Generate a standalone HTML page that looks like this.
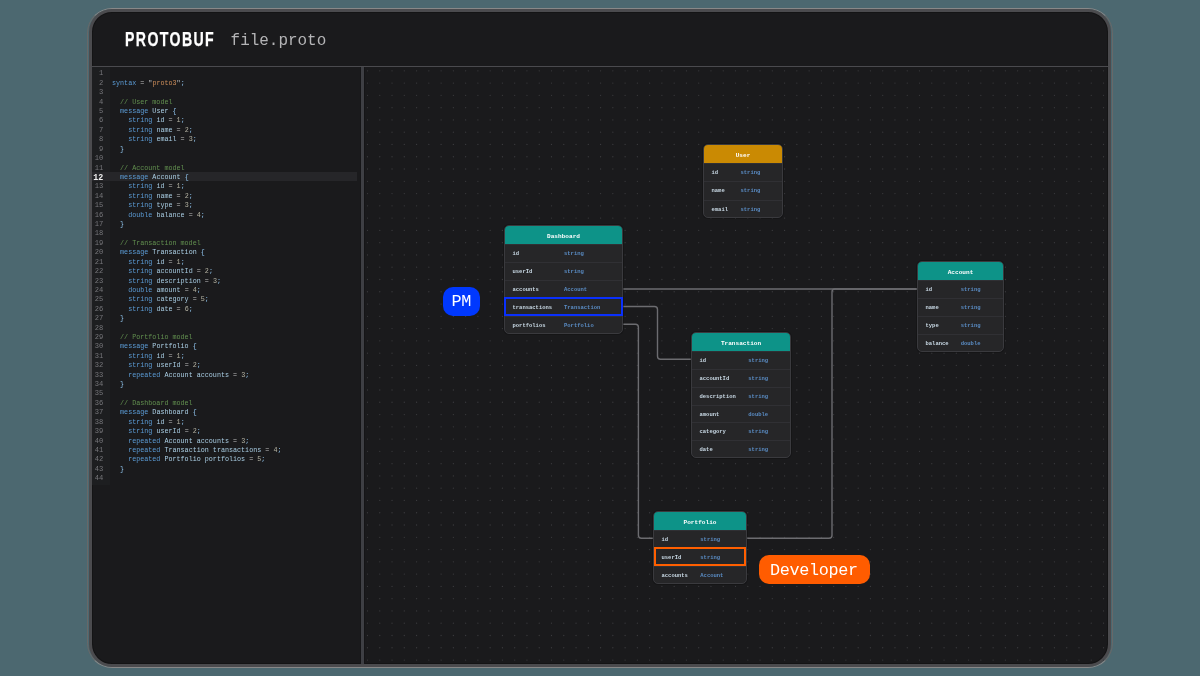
<!DOCTYPE html>
<html><head><meta charset="utf-8">
<style>
*{margin:0;padding:0;box-sizing:border-box}
html,body{width:1200px;height:676px;overflow:hidden;background:#4c6870}
body{position:relative;font-family:"Liberation Mono",monospace}
.abs{position:absolute}
#outline{position:absolute;left:87px;top:8px;width:1026px;height:660px;border:1px solid #888;border-left-color:#686868;border-right-color:#686868;border-radius:25px}
#win{position:absolute;left:89px;top:9px;width:1022px;height:658px;border:3px solid #4b4b4e;border-radius:23px;background:#1a1a1c;box-shadow:inset 0 0 0 1px #141415;overflow:hidden}
#hline{position:absolute;left:92px;top:66px;width:1016px;height:1px;background:#4a4a4e}
#vline{position:absolute;left:361px;top:67px;width:2.6px;height:597px;background:#3e3f44;box-shadow:-1px 0 0 #151517,1px 0 0 #151517}
#brand{position:absolute;left:124.6px;top:26.5px;font-family:"Liberation Sans",sans-serif;font-weight:bold;font-size:19.9px;letter-spacing:1.95px;line-height:24px;color:#fff;-webkit-text-stroke:0.25px #fff;transform-origin:0 0;transform:scaleX(0.71);white-space:nowrap}
#fname{position:absolute;left:230.6px;top:29.7px;font-size:15.95px;line-height:22px;color:#b4b4b6;white-space:nowrap}
#gutter{position:absolute;left:92px;top:67px;width:18px;height:418px;background:#1d1e20}
.cur-row{position:absolute;left:92px;top:171.8px;width:265.2px;height:9.2px;background:#262629}
.ln{position:absolute;left:90px;width:13.2px;text-align:right;font-size:7.1px;line-height:9.445px;color:#76767a;white-space:pre}
.ln.cur{color:#f0f0f0;font-weight:bold;font-size:8.3px}
.cl{position:absolute;left:112px;font-size:6.73px;line-height:9.445px;white-space:pre;color:#c8d0d8}
.kw{color:#5b9bd5} .ty{color:#acd0e6} .id{color:#a8cce2} .nu{color:#b4b2a2} .br{color:#8fc3ec} .pu{color:#c0c0c0} .st{color:#ce8e5a} .cm{color:#62904f}
#canvas{position:absolute;left:0;top:0}
.tb{position:absolute;background:#262628;border:1px solid #3a3a3e;border-radius:5px;overflow:hidden;box-shadow:0 0 0 1px rgba(0,0,0,0.18)}
.th{position:absolute;left:0;top:0;right:0;height:18.2px;text-align:center;color:#fff;font-weight:bold;font-size:6.1px;line-height:21.6px}
.tr{position:absolute;left:0;right:0;border-top:1px solid #303034}
.fn{position:absolute;left:7.5px;top:0;font-size:5.5px;color:#c8d8e4;font-weight:bold}
.ft{position:absolute;top:0;font-size:5.5px;color:#5a8cc4;font-weight:bold}
.hl{position:absolute;border:2px solid}
.badge{position:absolute;color:#fff;text-align:center;white-space:nowrap}
</style></head><body><div id="root" style="position:absolute;left:0;top:0;width:1200px;height:676px;will-change:transform">
<div id="outline"></div>
<div id="win"></div>
<div id="hline"></div>
<div id="vline"></div>
<div id="brand">PROTOBUF</div>
<div id="fname">file.proto</div>
<div id="gutter"></div><div class="cur-row"></div>
<div class="ln" style="top:69.40px">1</div><div class="cl" style="top:69.40px"></div><div class="ln" style="top:78.81px">2</div><div class="cl" style="top:78.81px"><span class="kw">syntax</span> <span class="pu">=</span> <span class="pu">"</span><span class="st">proto3</span><span class="pu">"</span><span class="br">;</span></div><div class="ln" style="top:88.23px">3</div><div class="cl" style="top:88.23px"></div><div class="ln" style="top:97.64px">4</div><div class="cl" style="top:97.64px">  <span class="cm">// User model</span></div><div class="ln" style="top:107.06px">5</div><div class="cl" style="top:107.06px">  <span class="kw">message</span> <span class="ty">User</span> <span class="br">{</span></div><div class="ln" style="top:116.47px">6</div><div class="cl" style="top:116.47px">    <span class="kw">string</span> <span class="id">id</span> <span class="pu">=</span> <span class="nu">1</span><span class="br">;</span></div><div class="ln" style="top:125.88px">7</div><div class="cl" style="top:125.88px">    <span class="kw">string</span> <span class="id">name</span> <span class="pu">=</span> <span class="nu">2</span><span class="br">;</span></div><div class="ln" style="top:135.30px">8</div><div class="cl" style="top:135.30px">    <span class="kw">string</span> <span class="id">email</span> <span class="pu">=</span> <span class="nu">3</span><span class="br">;</span></div><div class="ln" style="top:144.71px">9</div><div class="cl" style="top:144.71px">  <span class="br">}</span></div><div class="ln" style="top:154.13px">10</div><div class="cl" style="top:154.13px"></div><div class="ln" style="top:163.54px">11</div><div class="cl" style="top:163.54px">  <span class="cm">// Account model</span></div><div class="ln cur" style="top:172.95px">12</div><div class="cl" style="top:172.95px">  <span class="kw">message</span> <span class="ty">Account</span> <span class="br">{</span></div><div class="ln" style="top:182.37px">13</div><div class="cl" style="top:182.37px">    <span class="kw">string</span> <span class="id">id</span> <span class="pu">=</span> <span class="nu">1</span><span class="br">;</span></div><div class="ln" style="top:191.78px">14</div><div class="cl" style="top:191.78px">    <span class="kw">string</span> <span class="id">name</span> <span class="pu">=</span> <span class="nu">2</span><span class="br">;</span></div><div class="ln" style="top:201.20px">15</div><div class="cl" style="top:201.20px">    <span class="kw">string</span> <span class="id">type</span> <span class="pu">=</span> <span class="nu">3</span><span class="br">;</span></div><div class="ln" style="top:210.61px">16</div><div class="cl" style="top:210.61px">    <span class="kw">double</span> <span class="id">balance</span> <span class="pu">=</span> <span class="nu">4</span><span class="br">;</span></div><div class="ln" style="top:220.02px">17</div><div class="cl" style="top:220.02px">  <span class="br">}</span></div><div class="ln" style="top:229.44px">18</div><div class="cl" style="top:229.44px"></div><div class="ln" style="top:238.85px">19</div><div class="cl" style="top:238.85px">  <span class="cm">// Transaction model</span></div><div class="ln" style="top:248.27px">20</div><div class="cl" style="top:248.27px">  <span class="kw">message</span> <span class="ty">Transaction</span> <span class="br">{</span></div><div class="ln" style="top:257.68px">21</div><div class="cl" style="top:257.68px">    <span class="kw">string</span> <span class="id">id</span> <span class="pu">=</span> <span class="nu">1</span><span class="br">;</span></div><div class="ln" style="top:267.09px">22</div><div class="cl" style="top:267.09px">    <span class="kw">string</span> <span class="id">accountId</span> <span class="pu">=</span> <span class="nu">2</span><span class="br">;</span></div><div class="ln" style="top:276.51px">23</div><div class="cl" style="top:276.51px">    <span class="kw">string</span> <span class="id">description</span> <span class="pu">=</span> <span class="nu">3</span><span class="br">;</span></div><div class="ln" style="top:285.92px">24</div><div class="cl" style="top:285.92px">    <span class="kw">double</span> <span class="id">amount</span> <span class="pu">=</span> <span class="nu">4</span><span class="br">;</span></div><div class="ln" style="top:295.34px">25</div><div class="cl" style="top:295.34px">    <span class="kw">string</span> <span class="id">category</span> <span class="pu">=</span> <span class="nu">5</span><span class="br">;</span></div><div class="ln" style="top:304.75px">26</div><div class="cl" style="top:304.75px">    <span class="kw">string</span> <span class="id">date</span> <span class="pu">=</span> <span class="nu">6</span><span class="br">;</span></div><div class="ln" style="top:314.16px">27</div><div class="cl" style="top:314.16px">  <span class="br">}</span></div><div class="ln" style="top:323.58px">28</div><div class="cl" style="top:323.58px"></div><div class="ln" style="top:332.99px">29</div><div class="cl" style="top:332.99px">  <span class="cm">// Portfolio model</span></div><div class="ln" style="top:342.41px">30</div><div class="cl" style="top:342.41px">  <span class="kw">message</span> <span class="ty">Portfolio</span> <span class="br">{</span></div><div class="ln" style="top:351.82px">31</div><div class="cl" style="top:351.82px">    <span class="kw">string</span> <span class="id">id</span> <span class="pu">=</span> <span class="nu">1</span><span class="br">;</span></div><div class="ln" style="top:361.23px">32</div><div class="cl" style="top:361.23px">    <span class="kw">string</span> <span class="id">userId</span> <span class="pu">=</span> <span class="nu">2</span><span class="br">;</span></div><div class="ln" style="top:370.65px">33</div><div class="cl" style="top:370.65px">    <span class="kw">repeated</span> <span class="ty">Account</span> <span class="id">accounts</span> <span class="pu">=</span> <span class="nu">3</span><span class="br">;</span></div><div class="ln" style="top:380.06px">34</div><div class="cl" style="top:380.06px">  <span class="br">}</span></div><div class="ln" style="top:389.48px">35</div><div class="cl" style="top:389.48px"></div><div class="ln" style="top:398.89px">36</div><div class="cl" style="top:398.89px">  <span class="cm">// Dashboard model</span></div><div class="ln" style="top:408.30px">37</div><div class="cl" style="top:408.30px">  <span class="kw">message</span> <span class="ty">Dashboard</span> <span class="br">{</span></div><div class="ln" style="top:417.72px">38</div><div class="cl" style="top:417.72px">    <span class="kw">string</span> <span class="id">id</span> <span class="pu">=</span> <span class="nu">1</span><span class="br">;</span></div><div class="ln" style="top:427.13px">39</div><div class="cl" style="top:427.13px">    <span class="kw">string</span> <span class="id">userId</span> <span class="pu">=</span> <span class="nu">2</span><span class="br">;</span></div><div class="ln" style="top:436.55px">40</div><div class="cl" style="top:436.55px">    <span class="kw">repeated</span> <span class="ty">Account</span> <span class="id">accounts</span> <span class="pu">=</span> <span class="nu">3</span><span class="br">;</span></div><div class="ln" style="top:445.96px">41</div><div class="cl" style="top:445.96px">    <span class="kw">repeated</span> <span class="ty">Transaction</span> <span class="id">transactions</span> <span class="pu">=</span> <span class="nu">4</span><span class="br">;</span></div><div class="ln" style="top:455.37px">42</div><div class="cl" style="top:455.37px">    <span class="kw">repeated</span> <span class="ty">Portfolio</span> <span class="id">portfolios</span> <span class="pu">=</span> <span class="nu">5</span><span class="br">;</span></div><div class="ln" style="top:464.79px">43</div><div class="cl" style="top:464.79px">  <span class="br">}</span></div><div class="ln" style="top:474.20px">44</div><div class="cl" style="top:474.20px"></div>
<svg id="canvas" width="1200" height="676" viewBox="0 0 1200 676">
<defs><clipPath id="cp"><rect x="364" y="67" width="744" height="597"/></clipPath></defs>
<path clip-path="url(#cp)" d="M367.50 70.80h0M379.77 70.80h0M392.03 70.80h0M404.30 70.80h0M416.57 70.80h0M428.83 70.80h0M441.10 70.80h0M453.37 70.80h0M465.64 70.80h0M477.90 70.80h0M490.17 70.80h0M502.44 70.80h0M514.70 70.80h0M526.97 70.80h0M539.24 70.80h0M551.50 70.80h0M563.77 70.80h0M576.04 70.80h0M588.31 70.80h0M600.57 70.80h0M612.84 70.80h0M625.11 70.80h0M637.37 70.80h0M649.64 70.80h0M661.91 70.80h0M674.17 70.80h0M686.44 70.80h0M698.71 70.80h0M710.98 70.80h0M723.24 70.80h0M735.51 70.80h0M747.78 70.80h0M760.04 70.80h0M772.31 70.80h0M784.58 70.80h0M796.85 70.80h0M809.11 70.80h0M821.38 70.80h0M833.65 70.80h0M845.91 70.80h0M858.18 70.80h0M870.45 70.80h0M882.71 70.80h0M894.98 70.80h0M907.25 70.80h0M919.51 70.80h0M931.78 70.80h0M944.05 70.80h0M956.32 70.80h0M968.58 70.80h0M980.85 70.80h0M993.12 70.80h0M1005.38 70.80h0M1017.65 70.80h0M1029.92 70.80h0M1042.18 70.80h0M1054.45 70.80h0M1066.72 70.80h0M1078.99 70.80h0M1091.25 70.80h0M1103.52 70.80h0M367.50 83.08h0M379.77 83.08h0M392.03 83.08h0M404.30 83.08h0M416.57 83.08h0M428.83 83.08h0M441.10 83.08h0M453.37 83.08h0M465.64 83.08h0M477.90 83.08h0M490.17 83.08h0M502.44 83.08h0M514.70 83.08h0M526.97 83.08h0M539.24 83.08h0M551.50 83.08h0M563.77 83.08h0M576.04 83.08h0M588.31 83.08h0M600.57 83.08h0M612.84 83.08h0M625.11 83.08h0M637.37 83.08h0M649.64 83.08h0M661.91 83.08h0M674.17 83.08h0M686.44 83.08h0M698.71 83.08h0M710.98 83.08h0M723.24 83.08h0M735.51 83.08h0M747.78 83.08h0M760.04 83.08h0M772.31 83.08h0M784.58 83.08h0M796.85 83.08h0M809.11 83.08h0M821.38 83.08h0M833.65 83.08h0M845.91 83.08h0M858.18 83.08h0M870.45 83.08h0M882.71 83.08h0M894.98 83.08h0M907.25 83.08h0M919.51 83.08h0M931.78 83.08h0M944.05 83.08h0M956.32 83.08h0M968.58 83.08h0M980.85 83.08h0M993.12 83.08h0M1005.38 83.08h0M1017.65 83.08h0M1029.92 83.08h0M1042.18 83.08h0M1054.45 83.08h0M1066.72 83.08h0M1078.99 83.08h0M1091.25 83.08h0M1103.52 83.08h0M367.50 95.35h0M379.77 95.35h0M392.03 95.35h0M404.30 95.35h0M416.57 95.35h0M428.83 95.35h0M441.10 95.35h0M453.37 95.35h0M465.64 95.35h0M477.90 95.35h0M490.17 95.35h0M502.44 95.35h0M514.70 95.35h0M526.97 95.35h0M539.24 95.35h0M551.50 95.35h0M563.77 95.35h0M576.04 95.35h0M588.31 95.35h0M600.57 95.35h0M612.84 95.35h0M625.11 95.35h0M637.37 95.35h0M649.64 95.35h0M661.91 95.35h0M674.17 95.35h0M686.44 95.35h0M698.71 95.35h0M710.98 95.35h0M723.24 95.35h0M735.51 95.35h0M747.78 95.35h0M760.04 95.35h0M772.31 95.35h0M784.58 95.35h0M796.85 95.35h0M809.11 95.35h0M821.38 95.35h0M833.65 95.35h0M845.91 95.35h0M858.18 95.35h0M870.45 95.35h0M882.71 95.35h0M894.98 95.35h0M907.25 95.35h0M919.51 95.35h0M931.78 95.35h0M944.05 95.35h0M956.32 95.35h0M968.58 95.35h0M980.85 95.35h0M993.12 95.35h0M1005.38 95.35h0M1017.65 95.35h0M1029.92 95.35h0M1042.18 95.35h0M1054.45 95.35h0M1066.72 95.35h0M1078.99 95.35h0M1091.25 95.35h0M1103.52 95.35h0M367.50 107.63h0M379.77 107.63h0M392.03 107.63h0M404.30 107.63h0M416.57 107.63h0M428.83 107.63h0M441.10 107.63h0M453.37 107.63h0M465.64 107.63h0M477.90 107.63h0M490.17 107.63h0M502.44 107.63h0M514.70 107.63h0M526.97 107.63h0M539.24 107.63h0M551.50 107.63h0M563.77 107.63h0M576.04 107.63h0M588.31 107.63h0M600.57 107.63h0M612.84 107.63h0M625.11 107.63h0M637.37 107.63h0M649.64 107.63h0M661.91 107.63h0M674.17 107.63h0M686.44 107.63h0M698.71 107.63h0M710.98 107.63h0M723.24 107.63h0M735.51 107.63h0M747.78 107.63h0M760.04 107.63h0M772.31 107.63h0M784.58 107.63h0M796.85 107.63h0M809.11 107.63h0M821.38 107.63h0M833.65 107.63h0M845.91 107.63h0M858.18 107.63h0M870.45 107.63h0M882.71 107.63h0M894.98 107.63h0M907.25 107.63h0M919.51 107.63h0M931.78 107.63h0M944.05 107.63h0M956.32 107.63h0M968.58 107.63h0M980.85 107.63h0M993.12 107.63h0M1005.38 107.63h0M1017.65 107.63h0M1029.92 107.63h0M1042.18 107.63h0M1054.45 107.63h0M1066.72 107.63h0M1078.99 107.63h0M1091.25 107.63h0M1103.52 107.63h0M367.50 119.90h0M379.77 119.90h0M392.03 119.90h0M404.30 119.90h0M416.57 119.90h0M428.83 119.90h0M441.10 119.90h0M453.37 119.90h0M465.64 119.90h0M477.90 119.90h0M490.17 119.90h0M502.44 119.90h0M514.70 119.90h0M526.97 119.90h0M539.24 119.90h0M551.50 119.90h0M563.77 119.90h0M576.04 119.90h0M588.31 119.90h0M600.57 119.90h0M612.84 119.90h0M625.11 119.90h0M637.37 119.90h0M649.64 119.90h0M661.91 119.90h0M674.17 119.90h0M686.44 119.90h0M698.71 119.90h0M710.98 119.90h0M723.24 119.90h0M735.51 119.90h0M747.78 119.90h0M760.04 119.90h0M772.31 119.90h0M784.58 119.90h0M796.85 119.90h0M809.11 119.90h0M821.38 119.90h0M833.65 119.90h0M845.91 119.90h0M858.18 119.90h0M870.45 119.90h0M882.71 119.90h0M894.98 119.90h0M907.25 119.90h0M919.51 119.90h0M931.78 119.90h0M944.05 119.90h0M956.32 119.90h0M968.58 119.90h0M980.85 119.90h0M993.12 119.90h0M1005.38 119.90h0M1017.65 119.90h0M1029.92 119.90h0M1042.18 119.90h0M1054.45 119.90h0M1066.72 119.90h0M1078.99 119.90h0M1091.25 119.90h0M1103.52 119.90h0M367.50 132.18h0M379.77 132.18h0M392.03 132.18h0M404.30 132.18h0M416.57 132.18h0M428.83 132.18h0M441.10 132.18h0M453.37 132.18h0M465.64 132.18h0M477.90 132.18h0M490.17 132.18h0M502.44 132.18h0M514.70 132.18h0M526.97 132.18h0M539.24 132.18h0M551.50 132.18h0M563.77 132.18h0M576.04 132.18h0M588.31 132.18h0M600.57 132.18h0M612.84 132.18h0M625.11 132.18h0M637.37 132.18h0M649.64 132.18h0M661.91 132.18h0M674.17 132.18h0M686.44 132.18h0M698.71 132.18h0M710.98 132.18h0M723.24 132.18h0M735.51 132.18h0M747.78 132.18h0M760.04 132.18h0M772.31 132.18h0M784.58 132.18h0M796.85 132.18h0M809.11 132.18h0M821.38 132.18h0M833.65 132.18h0M845.91 132.18h0M858.18 132.18h0M870.45 132.18h0M882.71 132.18h0M894.98 132.18h0M907.25 132.18h0M919.51 132.18h0M931.78 132.18h0M944.05 132.18h0M956.32 132.18h0M968.58 132.18h0M980.85 132.18h0M993.12 132.18h0M1005.38 132.18h0M1017.65 132.18h0M1029.92 132.18h0M1042.18 132.18h0M1054.45 132.18h0M1066.72 132.18h0M1078.99 132.18h0M1091.25 132.18h0M1103.52 132.18h0M367.50 144.46h0M379.77 144.46h0M392.03 144.46h0M404.30 144.46h0M416.57 144.46h0M428.83 144.46h0M441.10 144.46h0M453.37 144.46h0M465.64 144.46h0M477.90 144.46h0M490.17 144.46h0M502.44 144.46h0M514.70 144.46h0M526.97 144.46h0M539.24 144.46h0M551.50 144.46h0M563.77 144.46h0M576.04 144.46h0M588.31 144.46h0M600.57 144.46h0M612.84 144.46h0M625.11 144.46h0M637.37 144.46h0M649.64 144.46h0M661.91 144.46h0M674.17 144.46h0M686.44 144.46h0M698.71 144.46h0M710.98 144.46h0M723.24 144.46h0M735.51 144.46h0M747.78 144.46h0M760.04 144.46h0M772.31 144.46h0M784.58 144.46h0M796.85 144.46h0M809.11 144.46h0M821.38 144.46h0M833.65 144.46h0M845.91 144.46h0M858.18 144.46h0M870.45 144.46h0M882.71 144.46h0M894.98 144.46h0M907.25 144.46h0M919.51 144.46h0M931.78 144.46h0M944.05 144.46h0M956.32 144.46h0M968.58 144.46h0M980.85 144.46h0M993.12 144.46h0M1005.38 144.46h0M1017.65 144.46h0M1029.92 144.46h0M1042.18 144.46h0M1054.45 144.46h0M1066.72 144.46h0M1078.99 144.46h0M1091.25 144.46h0M1103.52 144.46h0M367.50 156.73h0M379.77 156.73h0M392.03 156.73h0M404.30 156.73h0M416.57 156.73h0M428.83 156.73h0M441.10 156.73h0M453.37 156.73h0M465.64 156.73h0M477.90 156.73h0M490.17 156.73h0M502.44 156.73h0M514.70 156.73h0M526.97 156.73h0M539.24 156.73h0M551.50 156.73h0M563.77 156.73h0M576.04 156.73h0M588.31 156.73h0M600.57 156.73h0M612.84 156.73h0M625.11 156.73h0M637.37 156.73h0M649.64 156.73h0M661.91 156.73h0M674.17 156.73h0M686.44 156.73h0M698.71 156.73h0M710.98 156.73h0M723.24 156.73h0M735.51 156.73h0M747.78 156.73h0M760.04 156.73h0M772.31 156.73h0M784.58 156.73h0M796.85 156.73h0M809.11 156.73h0M821.38 156.73h0M833.65 156.73h0M845.91 156.73h0M858.18 156.73h0M870.45 156.73h0M882.71 156.73h0M894.98 156.73h0M907.25 156.73h0M919.51 156.73h0M931.78 156.73h0M944.05 156.73h0M956.32 156.73h0M968.58 156.73h0M980.85 156.73h0M993.12 156.73h0M1005.38 156.73h0M1017.65 156.73h0M1029.92 156.73h0M1042.18 156.73h0M1054.45 156.73h0M1066.72 156.73h0M1078.99 156.73h0M1091.25 156.73h0M1103.52 156.73h0M367.50 169.01h0M379.77 169.01h0M392.03 169.01h0M404.30 169.01h0M416.57 169.01h0M428.83 169.01h0M441.10 169.01h0M453.37 169.01h0M465.64 169.01h0M477.90 169.01h0M490.17 169.01h0M502.44 169.01h0M514.70 169.01h0M526.97 169.01h0M539.24 169.01h0M551.50 169.01h0M563.77 169.01h0M576.04 169.01h0M588.31 169.01h0M600.57 169.01h0M612.84 169.01h0M625.11 169.01h0M637.37 169.01h0M649.64 169.01h0M661.91 169.01h0M674.17 169.01h0M686.44 169.01h0M698.71 169.01h0M710.98 169.01h0M723.24 169.01h0M735.51 169.01h0M747.78 169.01h0M760.04 169.01h0M772.31 169.01h0M784.58 169.01h0M796.85 169.01h0M809.11 169.01h0M821.38 169.01h0M833.65 169.01h0M845.91 169.01h0M858.18 169.01h0M870.45 169.01h0M882.71 169.01h0M894.98 169.01h0M907.25 169.01h0M919.51 169.01h0M931.78 169.01h0M944.05 169.01h0M956.32 169.01h0M968.58 169.01h0M980.85 169.01h0M993.12 169.01h0M1005.38 169.01h0M1017.65 169.01h0M1029.92 169.01h0M1042.18 169.01h0M1054.45 169.01h0M1066.72 169.01h0M1078.99 169.01h0M1091.25 169.01h0M1103.52 169.01h0M367.50 181.28h0M379.77 181.28h0M392.03 181.28h0M404.30 181.28h0M416.57 181.28h0M428.83 181.28h0M441.10 181.28h0M453.37 181.28h0M465.64 181.28h0M477.90 181.28h0M490.17 181.28h0M502.44 181.28h0M514.70 181.28h0M526.97 181.28h0M539.24 181.28h0M551.50 181.28h0M563.77 181.28h0M576.04 181.28h0M588.31 181.28h0M600.57 181.28h0M612.84 181.28h0M625.11 181.28h0M637.37 181.28h0M649.64 181.28h0M661.91 181.28h0M674.17 181.28h0M686.44 181.28h0M698.71 181.28h0M710.98 181.28h0M723.24 181.28h0M735.51 181.28h0M747.78 181.28h0M760.04 181.28h0M772.31 181.28h0M784.58 181.28h0M796.85 181.28h0M809.11 181.28h0M821.38 181.28h0M833.65 181.28h0M845.91 181.28h0M858.18 181.28h0M870.45 181.28h0M882.71 181.28h0M894.98 181.28h0M907.25 181.28h0M919.51 181.28h0M931.78 181.28h0M944.05 181.28h0M956.32 181.28h0M968.58 181.28h0M980.85 181.28h0M993.12 181.28h0M1005.38 181.28h0M1017.65 181.28h0M1029.92 181.28h0M1042.18 181.28h0M1054.45 181.28h0M1066.72 181.28h0M1078.99 181.28h0M1091.25 181.28h0M1103.52 181.28h0M367.50 193.56h0M379.77 193.56h0M392.03 193.56h0M404.30 193.56h0M416.57 193.56h0M428.83 193.56h0M441.10 193.56h0M453.37 193.56h0M465.64 193.56h0M477.90 193.56h0M490.17 193.56h0M502.44 193.56h0M514.70 193.56h0M526.97 193.56h0M539.24 193.56h0M551.50 193.56h0M563.77 193.56h0M576.04 193.56h0M588.31 193.56h0M600.57 193.56h0M612.84 193.56h0M625.11 193.56h0M637.37 193.56h0M649.64 193.56h0M661.91 193.56h0M674.17 193.56h0M686.44 193.56h0M698.71 193.56h0M710.98 193.56h0M723.24 193.56h0M735.51 193.56h0M747.78 193.56h0M760.04 193.56h0M772.31 193.56h0M784.58 193.56h0M796.85 193.56h0M809.11 193.56h0M821.38 193.56h0M833.65 193.56h0M845.91 193.56h0M858.18 193.56h0M870.45 193.56h0M882.71 193.56h0M894.98 193.56h0M907.25 193.56h0M919.51 193.56h0M931.78 193.56h0M944.05 193.56h0M956.32 193.56h0M968.58 193.56h0M980.85 193.56h0M993.12 193.56h0M1005.38 193.56h0M1017.65 193.56h0M1029.92 193.56h0M1042.18 193.56h0M1054.45 193.56h0M1066.72 193.56h0M1078.99 193.56h0M1091.25 193.56h0M1103.52 193.56h0M367.50 205.84h0M379.77 205.84h0M392.03 205.84h0M404.30 205.84h0M416.57 205.84h0M428.83 205.84h0M441.10 205.84h0M453.37 205.84h0M465.64 205.84h0M477.90 205.84h0M490.17 205.84h0M502.44 205.84h0M514.70 205.84h0M526.97 205.84h0M539.24 205.84h0M551.50 205.84h0M563.77 205.84h0M576.04 205.84h0M588.31 205.84h0M600.57 205.84h0M612.84 205.84h0M625.11 205.84h0M637.37 205.84h0M649.64 205.84h0M661.91 205.84h0M674.17 205.84h0M686.44 205.84h0M698.71 205.84h0M710.98 205.84h0M723.24 205.84h0M735.51 205.84h0M747.78 205.84h0M760.04 205.84h0M772.31 205.84h0M784.58 205.84h0M796.85 205.84h0M809.11 205.84h0M821.38 205.84h0M833.65 205.84h0M845.91 205.84h0M858.18 205.84h0M870.45 205.84h0M882.71 205.84h0M894.98 205.84h0M907.25 205.84h0M919.51 205.84h0M931.78 205.84h0M944.05 205.84h0M956.32 205.84h0M968.58 205.84h0M980.85 205.84h0M993.12 205.84h0M1005.38 205.84h0M1017.65 205.84h0M1029.92 205.84h0M1042.18 205.84h0M1054.45 205.84h0M1066.72 205.84h0M1078.99 205.84h0M1091.25 205.84h0M1103.52 205.84h0M367.50 218.11h0M379.77 218.11h0M392.03 218.11h0M404.30 218.11h0M416.57 218.11h0M428.83 218.11h0M441.10 218.11h0M453.37 218.11h0M465.64 218.11h0M477.90 218.11h0M490.17 218.11h0M502.44 218.11h0M514.70 218.11h0M526.97 218.11h0M539.24 218.11h0M551.50 218.11h0M563.77 218.11h0M576.04 218.11h0M588.31 218.11h0M600.57 218.11h0M612.84 218.11h0M625.11 218.11h0M637.37 218.11h0M649.64 218.11h0M661.91 218.11h0M674.17 218.11h0M686.44 218.11h0M698.71 218.11h0M710.98 218.11h0M723.24 218.11h0M735.51 218.11h0M747.78 218.11h0M760.04 218.11h0M772.31 218.11h0M784.58 218.11h0M796.85 218.11h0M809.11 218.11h0M821.38 218.11h0M833.65 218.11h0M845.91 218.11h0M858.18 218.11h0M870.45 218.11h0M882.71 218.11h0M894.98 218.11h0M907.25 218.11h0M919.51 218.11h0M931.78 218.11h0M944.05 218.11h0M956.32 218.11h0M968.58 218.11h0M980.85 218.11h0M993.12 218.11h0M1005.38 218.11h0M1017.65 218.11h0M1029.92 218.11h0M1042.18 218.11h0M1054.45 218.11h0M1066.72 218.11h0M1078.99 218.11h0M1091.25 218.11h0M1103.52 218.11h0M367.50 230.39h0M379.77 230.39h0M392.03 230.39h0M404.30 230.39h0M416.57 230.39h0M428.83 230.39h0M441.10 230.39h0M453.37 230.39h0M465.64 230.39h0M477.90 230.39h0M490.17 230.39h0M502.44 230.39h0M514.70 230.39h0M526.97 230.39h0M539.24 230.39h0M551.50 230.39h0M563.77 230.39h0M576.04 230.39h0M588.31 230.39h0M600.57 230.39h0M612.84 230.39h0M625.11 230.39h0M637.37 230.39h0M649.64 230.39h0M661.91 230.39h0M674.17 230.39h0M686.44 230.39h0M698.71 230.39h0M710.98 230.39h0M723.24 230.39h0M735.51 230.39h0M747.78 230.39h0M760.04 230.39h0M772.31 230.39h0M784.58 230.39h0M796.85 230.39h0M809.11 230.39h0M821.38 230.39h0M833.65 230.39h0M845.91 230.39h0M858.18 230.39h0M870.45 230.39h0M882.71 230.39h0M894.98 230.39h0M907.25 230.39h0M919.51 230.39h0M931.78 230.39h0M944.05 230.39h0M956.32 230.39h0M968.58 230.39h0M980.85 230.39h0M993.12 230.39h0M1005.38 230.39h0M1017.65 230.39h0M1029.92 230.39h0M1042.18 230.39h0M1054.45 230.39h0M1066.72 230.39h0M1078.99 230.39h0M1091.25 230.39h0M1103.52 230.39h0M367.50 242.66h0M379.77 242.66h0M392.03 242.66h0M404.30 242.66h0M416.57 242.66h0M428.83 242.66h0M441.10 242.66h0M453.37 242.66h0M465.64 242.66h0M477.90 242.66h0M490.17 242.66h0M502.44 242.66h0M514.70 242.66h0M526.97 242.66h0M539.24 242.66h0M551.50 242.66h0M563.77 242.66h0M576.04 242.66h0M588.31 242.66h0M600.57 242.66h0M612.84 242.66h0M625.11 242.66h0M637.37 242.66h0M649.64 242.66h0M661.91 242.66h0M674.17 242.66h0M686.44 242.66h0M698.71 242.66h0M710.98 242.66h0M723.24 242.66h0M735.51 242.66h0M747.78 242.66h0M760.04 242.66h0M772.31 242.66h0M784.58 242.66h0M796.85 242.66h0M809.11 242.66h0M821.38 242.66h0M833.65 242.66h0M845.91 242.66h0M858.18 242.66h0M870.45 242.66h0M882.71 242.66h0M894.98 242.66h0M907.25 242.66h0M919.51 242.66h0M931.78 242.66h0M944.05 242.66h0M956.32 242.66h0M968.58 242.66h0M980.85 242.66h0M993.12 242.66h0M1005.38 242.66h0M1017.65 242.66h0M1029.92 242.66h0M1042.18 242.66h0M1054.45 242.66h0M1066.72 242.66h0M1078.99 242.66h0M1091.25 242.66h0M1103.52 242.66h0M367.50 254.94h0M379.77 254.94h0M392.03 254.94h0M404.30 254.94h0M416.57 254.94h0M428.83 254.94h0M441.10 254.94h0M453.37 254.94h0M465.64 254.94h0M477.90 254.94h0M490.17 254.94h0M502.44 254.94h0M514.70 254.94h0M526.97 254.94h0M539.24 254.94h0M551.50 254.94h0M563.77 254.94h0M576.04 254.94h0M588.31 254.94h0M600.57 254.94h0M612.84 254.94h0M625.11 254.94h0M637.37 254.94h0M649.64 254.94h0M661.91 254.94h0M674.17 254.94h0M686.44 254.94h0M698.71 254.94h0M710.98 254.94h0M723.24 254.94h0M735.51 254.94h0M747.78 254.94h0M760.04 254.94h0M772.31 254.94h0M784.58 254.94h0M796.85 254.94h0M809.11 254.94h0M821.38 254.94h0M833.65 254.94h0M845.91 254.94h0M858.18 254.94h0M870.45 254.94h0M882.71 254.94h0M894.98 254.94h0M907.25 254.94h0M919.51 254.94h0M931.78 254.94h0M944.05 254.94h0M956.32 254.94h0M968.58 254.94h0M980.85 254.94h0M993.12 254.94h0M1005.38 254.94h0M1017.65 254.94h0M1029.92 254.94h0M1042.18 254.94h0M1054.45 254.94h0M1066.72 254.94h0M1078.99 254.94h0M1091.25 254.94h0M1103.52 254.94h0M367.50 267.22h0M379.77 267.22h0M392.03 267.22h0M404.30 267.22h0M416.57 267.22h0M428.83 267.22h0M441.10 267.22h0M453.37 267.22h0M465.64 267.22h0M477.90 267.22h0M490.17 267.22h0M502.44 267.22h0M514.70 267.22h0M526.97 267.22h0M539.24 267.22h0M551.50 267.22h0M563.77 267.22h0M576.04 267.22h0M588.31 267.22h0M600.57 267.22h0M612.84 267.22h0M625.11 267.22h0M637.37 267.22h0M649.64 267.22h0M661.91 267.22h0M674.17 267.22h0M686.44 267.22h0M698.71 267.22h0M710.98 267.22h0M723.24 267.22h0M735.51 267.22h0M747.78 267.22h0M760.04 267.22h0M772.31 267.22h0M784.58 267.22h0M796.85 267.22h0M809.11 267.22h0M821.38 267.22h0M833.65 267.22h0M845.91 267.22h0M858.18 267.22h0M870.45 267.22h0M882.71 267.22h0M894.98 267.22h0M907.25 267.22h0M919.51 267.22h0M931.78 267.22h0M944.05 267.22h0M956.32 267.22h0M968.58 267.22h0M980.85 267.22h0M993.12 267.22h0M1005.38 267.22h0M1017.65 267.22h0M1029.92 267.22h0M1042.18 267.22h0M1054.45 267.22h0M1066.72 267.22h0M1078.99 267.22h0M1091.25 267.22h0M1103.52 267.22h0M367.50 279.49h0M379.77 279.49h0M392.03 279.49h0M404.30 279.49h0M416.57 279.49h0M428.83 279.49h0M441.10 279.49h0M453.37 279.49h0M465.64 279.49h0M477.90 279.49h0M490.17 279.49h0M502.44 279.49h0M514.70 279.49h0M526.97 279.49h0M539.24 279.49h0M551.50 279.49h0M563.77 279.49h0M576.04 279.49h0M588.31 279.49h0M600.57 279.49h0M612.84 279.49h0M625.11 279.49h0M637.37 279.49h0M649.64 279.49h0M661.91 279.49h0M674.17 279.49h0M686.44 279.49h0M698.71 279.49h0M710.98 279.49h0M723.24 279.49h0M735.51 279.49h0M747.78 279.49h0M760.04 279.49h0M772.31 279.49h0M784.58 279.49h0M796.85 279.49h0M809.11 279.49h0M821.38 279.49h0M833.65 279.49h0M845.91 279.49h0M858.18 279.49h0M870.45 279.49h0M882.71 279.49h0M894.98 279.49h0M907.25 279.49h0M919.51 279.49h0M931.78 279.49h0M944.05 279.49h0M956.32 279.49h0M968.58 279.49h0M980.85 279.49h0M993.12 279.49h0M1005.38 279.49h0M1017.65 279.49h0M1029.92 279.49h0M1042.18 279.49h0M1054.45 279.49h0M1066.72 279.49h0M1078.99 279.49h0M1091.25 279.49h0M1103.52 279.49h0M367.50 291.77h0M379.77 291.77h0M392.03 291.77h0M404.30 291.77h0M416.57 291.77h0M428.83 291.77h0M441.10 291.77h0M453.37 291.77h0M465.64 291.77h0M477.90 291.77h0M490.17 291.77h0M502.44 291.77h0M514.70 291.77h0M526.97 291.77h0M539.24 291.77h0M551.50 291.77h0M563.77 291.77h0M576.04 291.77h0M588.31 291.77h0M600.57 291.77h0M612.84 291.77h0M625.11 291.77h0M637.37 291.77h0M649.64 291.77h0M661.91 291.77h0M674.17 291.77h0M686.44 291.77h0M698.71 291.77h0M710.98 291.77h0M723.24 291.77h0M735.51 291.77h0M747.78 291.77h0M760.04 291.77h0M772.31 291.77h0M784.58 291.77h0M796.85 291.77h0M809.11 291.77h0M821.38 291.77h0M833.65 291.77h0M845.91 291.77h0M858.18 291.77h0M870.45 291.77h0M882.71 291.77h0M894.98 291.77h0M907.25 291.77h0M919.51 291.77h0M931.78 291.77h0M944.05 291.77h0M956.32 291.77h0M968.58 291.77h0M980.85 291.77h0M993.12 291.77h0M1005.38 291.77h0M1017.65 291.77h0M1029.92 291.77h0M1042.18 291.77h0M1054.45 291.77h0M1066.72 291.77h0M1078.99 291.77h0M1091.25 291.77h0M1103.52 291.77h0M367.50 304.04h0M379.77 304.04h0M392.03 304.04h0M404.30 304.04h0M416.57 304.04h0M428.83 304.04h0M441.10 304.04h0M453.37 304.04h0M465.64 304.04h0M477.90 304.04h0M490.17 304.04h0M502.44 304.04h0M514.70 304.04h0M526.97 304.04h0M539.24 304.04h0M551.50 304.04h0M563.77 304.04h0M576.04 304.04h0M588.31 304.04h0M600.57 304.04h0M612.84 304.04h0M625.11 304.04h0M637.37 304.04h0M649.64 304.04h0M661.91 304.04h0M674.17 304.04h0M686.44 304.04h0M698.71 304.04h0M710.98 304.04h0M723.24 304.04h0M735.51 304.04h0M747.78 304.04h0M760.04 304.04h0M772.31 304.04h0M784.58 304.04h0M796.85 304.04h0M809.11 304.04h0M821.38 304.04h0M833.65 304.04h0M845.91 304.04h0M858.18 304.04h0M870.45 304.04h0M882.71 304.04h0M894.98 304.04h0M907.25 304.04h0M919.51 304.04h0M931.78 304.04h0M944.05 304.04h0M956.32 304.04h0M968.58 304.04h0M980.85 304.04h0M993.12 304.04h0M1005.38 304.04h0M1017.65 304.04h0M1029.92 304.04h0M1042.18 304.04h0M1054.45 304.04h0M1066.72 304.04h0M1078.99 304.04h0M1091.25 304.04h0M1103.52 304.04h0M367.50 316.32h0M379.77 316.32h0M392.03 316.32h0M404.30 316.32h0M416.57 316.32h0M428.83 316.32h0M441.10 316.32h0M453.37 316.32h0M465.64 316.32h0M477.90 316.32h0M490.17 316.32h0M502.44 316.32h0M514.70 316.32h0M526.97 316.32h0M539.24 316.32h0M551.50 316.32h0M563.77 316.32h0M576.04 316.32h0M588.31 316.32h0M600.57 316.32h0M612.84 316.32h0M625.11 316.32h0M637.37 316.32h0M649.64 316.32h0M661.91 316.32h0M674.17 316.32h0M686.44 316.32h0M698.71 316.32h0M710.98 316.32h0M723.24 316.32h0M735.51 316.32h0M747.78 316.32h0M760.04 316.32h0M772.31 316.32h0M784.58 316.32h0M796.85 316.32h0M809.11 316.32h0M821.38 316.32h0M833.65 316.32h0M845.91 316.32h0M858.18 316.32h0M870.45 316.32h0M882.71 316.32h0M894.98 316.32h0M907.25 316.32h0M919.51 316.32h0M931.78 316.32h0M944.05 316.32h0M956.32 316.32h0M968.58 316.32h0M980.85 316.32h0M993.12 316.32h0M1005.38 316.32h0M1017.65 316.32h0M1029.92 316.32h0M1042.18 316.32h0M1054.45 316.32h0M1066.72 316.32h0M1078.99 316.32h0M1091.25 316.32h0M1103.52 316.32h0M367.50 328.60h0M379.77 328.60h0M392.03 328.60h0M404.30 328.60h0M416.57 328.60h0M428.83 328.60h0M441.10 328.60h0M453.37 328.60h0M465.64 328.60h0M477.90 328.60h0M490.17 328.60h0M502.44 328.60h0M514.70 328.60h0M526.97 328.60h0M539.24 328.60h0M551.50 328.60h0M563.77 328.60h0M576.04 328.60h0M588.31 328.60h0M600.57 328.60h0M612.84 328.60h0M625.11 328.60h0M637.37 328.60h0M649.64 328.60h0M661.91 328.60h0M674.17 328.60h0M686.44 328.60h0M698.71 328.60h0M710.98 328.60h0M723.24 328.60h0M735.51 328.60h0M747.78 328.60h0M760.04 328.60h0M772.31 328.60h0M784.58 328.60h0M796.85 328.60h0M809.11 328.60h0M821.38 328.60h0M833.65 328.60h0M845.91 328.60h0M858.18 328.60h0M870.45 328.60h0M882.71 328.60h0M894.98 328.60h0M907.25 328.60h0M919.51 328.60h0M931.78 328.60h0M944.05 328.60h0M956.32 328.60h0M968.58 328.60h0M980.85 328.60h0M993.12 328.60h0M1005.38 328.60h0M1017.65 328.60h0M1029.92 328.60h0M1042.18 328.60h0M1054.45 328.60h0M1066.72 328.60h0M1078.99 328.60h0M1091.25 328.60h0M1103.52 328.60h0M367.50 340.87h0M379.77 340.87h0M392.03 340.87h0M404.30 340.87h0M416.57 340.87h0M428.83 340.87h0M441.10 340.87h0M453.37 340.87h0M465.64 340.87h0M477.90 340.87h0M490.17 340.87h0M502.44 340.87h0M514.70 340.87h0M526.97 340.87h0M539.24 340.87h0M551.50 340.87h0M563.77 340.87h0M576.04 340.87h0M588.31 340.87h0M600.57 340.87h0M612.84 340.87h0M625.11 340.87h0M637.37 340.87h0M649.64 340.87h0M661.91 340.87h0M674.17 340.87h0M686.44 340.87h0M698.71 340.87h0M710.98 340.87h0M723.24 340.87h0M735.51 340.87h0M747.78 340.87h0M760.04 340.87h0M772.31 340.87h0M784.58 340.87h0M796.85 340.87h0M809.11 340.87h0M821.38 340.87h0M833.65 340.87h0M845.91 340.87h0M858.18 340.87h0M870.45 340.87h0M882.71 340.87h0M894.98 340.87h0M907.25 340.87h0M919.51 340.87h0M931.78 340.87h0M944.05 340.87h0M956.32 340.87h0M968.58 340.87h0M980.85 340.87h0M993.12 340.87h0M1005.38 340.87h0M1017.65 340.87h0M1029.92 340.87h0M1042.18 340.87h0M1054.45 340.87h0M1066.72 340.87h0M1078.99 340.87h0M1091.25 340.87h0M1103.52 340.87h0M367.50 353.15h0M379.77 353.15h0M392.03 353.15h0M404.30 353.15h0M416.57 353.15h0M428.83 353.15h0M441.10 353.15h0M453.37 353.15h0M465.64 353.15h0M477.90 353.15h0M490.17 353.15h0M502.44 353.15h0M514.70 353.15h0M526.97 353.15h0M539.24 353.15h0M551.50 353.15h0M563.77 353.15h0M576.04 353.15h0M588.31 353.15h0M600.57 353.15h0M612.84 353.15h0M625.11 353.15h0M637.37 353.15h0M649.64 353.15h0M661.91 353.15h0M674.17 353.15h0M686.44 353.15h0M698.71 353.15h0M710.98 353.15h0M723.24 353.15h0M735.51 353.15h0M747.78 353.15h0M760.04 353.15h0M772.31 353.15h0M784.58 353.15h0M796.85 353.15h0M809.11 353.15h0M821.38 353.15h0M833.65 353.15h0M845.91 353.15h0M858.18 353.15h0M870.45 353.15h0M882.71 353.15h0M894.98 353.15h0M907.25 353.15h0M919.51 353.15h0M931.78 353.15h0M944.05 353.15h0M956.32 353.15h0M968.58 353.15h0M980.85 353.15h0M993.12 353.15h0M1005.38 353.15h0M1017.65 353.15h0M1029.92 353.15h0M1042.18 353.15h0M1054.45 353.15h0M1066.72 353.15h0M1078.99 353.15h0M1091.25 353.15h0M1103.52 353.15h0M367.50 365.42h0M379.77 365.42h0M392.03 365.42h0M404.30 365.42h0M416.57 365.42h0M428.83 365.42h0M441.10 365.42h0M453.37 365.42h0M465.64 365.42h0M477.90 365.42h0M490.17 365.42h0M502.44 365.42h0M514.70 365.42h0M526.97 365.42h0M539.24 365.42h0M551.50 365.42h0M563.77 365.42h0M576.04 365.42h0M588.31 365.42h0M600.57 365.42h0M612.84 365.42h0M625.11 365.42h0M637.37 365.42h0M649.64 365.42h0M661.91 365.42h0M674.17 365.42h0M686.44 365.42h0M698.71 365.42h0M710.98 365.42h0M723.24 365.42h0M735.51 365.42h0M747.78 365.42h0M760.04 365.42h0M772.31 365.42h0M784.58 365.42h0M796.85 365.42h0M809.11 365.42h0M821.38 365.42h0M833.65 365.42h0M845.91 365.42h0M858.18 365.42h0M870.45 365.42h0M882.71 365.42h0M894.98 365.42h0M907.25 365.42h0M919.51 365.42h0M931.78 365.42h0M944.05 365.42h0M956.32 365.42h0M968.58 365.42h0M980.85 365.42h0M993.12 365.42h0M1005.38 365.42h0M1017.65 365.42h0M1029.92 365.42h0M1042.18 365.42h0M1054.45 365.42h0M1066.72 365.42h0M1078.99 365.42h0M1091.25 365.42h0M1103.52 365.42h0M367.50 377.70h0M379.77 377.70h0M392.03 377.70h0M404.30 377.70h0M416.57 377.70h0M428.83 377.70h0M441.10 377.70h0M453.37 377.70h0M465.64 377.70h0M477.90 377.70h0M490.17 377.70h0M502.44 377.70h0M514.70 377.70h0M526.97 377.70h0M539.24 377.70h0M551.50 377.70h0M563.77 377.70h0M576.04 377.70h0M588.31 377.70h0M600.57 377.70h0M612.84 377.70h0M625.11 377.70h0M637.37 377.70h0M649.64 377.70h0M661.91 377.70h0M674.17 377.70h0M686.44 377.70h0M698.71 377.70h0M710.98 377.70h0M723.24 377.70h0M735.51 377.70h0M747.78 377.70h0M760.04 377.70h0M772.31 377.70h0M784.58 377.70h0M796.85 377.70h0M809.11 377.70h0M821.38 377.70h0M833.65 377.70h0M845.91 377.70h0M858.18 377.70h0M870.45 377.70h0M882.71 377.70h0M894.98 377.70h0M907.25 377.70h0M919.51 377.70h0M931.78 377.70h0M944.05 377.70h0M956.32 377.70h0M968.58 377.70h0M980.85 377.70h0M993.12 377.70h0M1005.38 377.70h0M1017.65 377.70h0M1029.92 377.70h0M1042.18 377.70h0M1054.45 377.70h0M1066.72 377.70h0M1078.99 377.70h0M1091.25 377.70h0M1103.52 377.70h0M367.50 389.98h0M379.77 389.98h0M392.03 389.98h0M404.30 389.98h0M416.57 389.98h0M428.83 389.98h0M441.10 389.98h0M453.37 389.98h0M465.64 389.98h0M477.90 389.98h0M490.17 389.98h0M502.44 389.98h0M514.70 389.98h0M526.97 389.98h0M539.24 389.98h0M551.50 389.98h0M563.77 389.98h0M576.04 389.98h0M588.31 389.98h0M600.57 389.98h0M612.84 389.98h0M625.11 389.98h0M637.37 389.98h0M649.64 389.98h0M661.91 389.98h0M674.17 389.98h0M686.44 389.98h0M698.71 389.98h0M710.98 389.98h0M723.24 389.98h0M735.51 389.98h0M747.78 389.98h0M760.04 389.98h0M772.31 389.98h0M784.58 389.98h0M796.85 389.98h0M809.11 389.98h0M821.38 389.98h0M833.65 389.98h0M845.91 389.98h0M858.18 389.98h0M870.45 389.98h0M882.71 389.98h0M894.98 389.98h0M907.25 389.98h0M919.51 389.98h0M931.78 389.98h0M944.05 389.98h0M956.32 389.98h0M968.58 389.98h0M980.85 389.98h0M993.12 389.98h0M1005.38 389.98h0M1017.65 389.98h0M1029.92 389.98h0M1042.18 389.98h0M1054.45 389.98h0M1066.72 389.98h0M1078.99 389.98h0M1091.25 389.98h0M1103.52 389.98h0M367.50 402.25h0M379.77 402.25h0M392.03 402.25h0M404.30 402.25h0M416.57 402.25h0M428.83 402.25h0M441.10 402.25h0M453.37 402.25h0M465.64 402.25h0M477.90 402.25h0M490.17 402.25h0M502.44 402.25h0M514.70 402.25h0M526.97 402.25h0M539.24 402.25h0M551.50 402.25h0M563.77 402.25h0M576.04 402.25h0M588.31 402.25h0M600.57 402.25h0M612.84 402.25h0M625.11 402.25h0M637.37 402.25h0M649.64 402.25h0M661.91 402.25h0M674.17 402.25h0M686.44 402.25h0M698.71 402.25h0M710.98 402.25h0M723.24 402.25h0M735.51 402.25h0M747.78 402.25h0M760.04 402.25h0M772.31 402.25h0M784.58 402.25h0M796.85 402.25h0M809.11 402.25h0M821.38 402.25h0M833.65 402.25h0M845.91 402.25h0M858.18 402.25h0M870.45 402.25h0M882.71 402.25h0M894.98 402.25h0M907.25 402.25h0M919.51 402.25h0M931.78 402.25h0M944.05 402.25h0M956.32 402.25h0M968.58 402.25h0M980.85 402.25h0M993.12 402.25h0M1005.38 402.25h0M1017.65 402.25h0M1029.92 402.25h0M1042.18 402.25h0M1054.45 402.25h0M1066.72 402.25h0M1078.99 402.25h0M1091.25 402.25h0M1103.52 402.25h0M367.50 414.53h0M379.77 414.53h0M392.03 414.53h0M404.30 414.53h0M416.57 414.53h0M428.83 414.53h0M441.10 414.53h0M453.37 414.53h0M465.64 414.53h0M477.90 414.53h0M490.17 414.53h0M502.44 414.53h0M514.70 414.53h0M526.97 414.53h0M539.24 414.53h0M551.50 414.53h0M563.77 414.53h0M576.04 414.53h0M588.31 414.53h0M600.57 414.53h0M612.84 414.53h0M625.11 414.53h0M637.37 414.53h0M649.64 414.53h0M661.91 414.53h0M674.17 414.53h0M686.44 414.53h0M698.71 414.53h0M710.98 414.53h0M723.24 414.53h0M735.51 414.53h0M747.78 414.53h0M760.04 414.53h0M772.31 414.53h0M784.58 414.53h0M796.85 414.53h0M809.11 414.53h0M821.38 414.53h0M833.65 414.53h0M845.91 414.53h0M858.18 414.53h0M870.45 414.53h0M882.71 414.53h0M894.98 414.53h0M907.25 414.53h0M919.51 414.53h0M931.78 414.53h0M944.05 414.53h0M956.32 414.53h0M968.58 414.53h0M980.85 414.53h0M993.12 414.53h0M1005.38 414.53h0M1017.65 414.53h0M1029.92 414.53h0M1042.18 414.53h0M1054.45 414.53h0M1066.72 414.53h0M1078.99 414.53h0M1091.25 414.53h0M1103.52 414.53h0M367.50 426.80h0M379.77 426.80h0M392.03 426.80h0M404.30 426.80h0M416.57 426.80h0M428.83 426.80h0M441.10 426.80h0M453.37 426.80h0M465.64 426.80h0M477.90 426.80h0M490.17 426.80h0M502.44 426.80h0M514.70 426.80h0M526.97 426.80h0M539.24 426.80h0M551.50 426.80h0M563.77 426.80h0M576.04 426.80h0M588.31 426.80h0M600.57 426.80h0M612.84 426.80h0M625.11 426.80h0M637.37 426.80h0M649.64 426.80h0M661.91 426.80h0M674.17 426.80h0M686.44 426.80h0M698.71 426.80h0M710.98 426.80h0M723.24 426.80h0M735.51 426.80h0M747.78 426.80h0M760.04 426.80h0M772.31 426.80h0M784.58 426.80h0M796.85 426.80h0M809.11 426.80h0M821.38 426.80h0M833.65 426.80h0M845.91 426.80h0M858.18 426.80h0M870.45 426.80h0M882.71 426.80h0M894.98 426.80h0M907.25 426.80h0M919.51 426.80h0M931.78 426.80h0M944.05 426.80h0M956.32 426.80h0M968.58 426.80h0M980.85 426.80h0M993.12 426.80h0M1005.38 426.80h0M1017.65 426.80h0M1029.92 426.80h0M1042.18 426.80h0M1054.45 426.80h0M1066.72 426.80h0M1078.99 426.80h0M1091.25 426.80h0M1103.52 426.80h0M367.50 439.08h0M379.77 439.08h0M392.03 439.08h0M404.30 439.08h0M416.57 439.08h0M428.83 439.08h0M441.10 439.08h0M453.37 439.08h0M465.64 439.08h0M477.90 439.08h0M490.17 439.08h0M502.44 439.08h0M514.70 439.08h0M526.97 439.08h0M539.24 439.08h0M551.50 439.08h0M563.77 439.08h0M576.04 439.08h0M588.31 439.08h0M600.57 439.08h0M612.84 439.08h0M625.11 439.08h0M637.37 439.08h0M649.64 439.08h0M661.91 439.08h0M674.17 439.08h0M686.44 439.08h0M698.71 439.08h0M710.98 439.08h0M723.24 439.08h0M735.51 439.08h0M747.78 439.08h0M760.04 439.08h0M772.31 439.08h0M784.58 439.08h0M796.85 439.08h0M809.11 439.08h0M821.38 439.08h0M833.65 439.08h0M845.91 439.08h0M858.18 439.08h0M870.45 439.08h0M882.71 439.08h0M894.98 439.08h0M907.25 439.08h0M919.51 439.08h0M931.78 439.08h0M944.05 439.08h0M956.32 439.08h0M968.58 439.08h0M980.85 439.08h0M993.12 439.08h0M1005.38 439.08h0M1017.65 439.08h0M1029.92 439.08h0M1042.18 439.08h0M1054.45 439.08h0M1066.72 439.08h0M1078.99 439.08h0M1091.25 439.08h0M1103.52 439.08h0M367.50 451.36h0M379.77 451.36h0M392.03 451.36h0M404.30 451.36h0M416.57 451.36h0M428.83 451.36h0M441.10 451.36h0M453.37 451.36h0M465.64 451.36h0M477.90 451.36h0M490.17 451.36h0M502.44 451.36h0M514.70 451.36h0M526.97 451.36h0M539.24 451.36h0M551.50 451.36h0M563.77 451.36h0M576.04 451.36h0M588.31 451.36h0M600.57 451.36h0M612.84 451.36h0M625.11 451.36h0M637.37 451.36h0M649.64 451.36h0M661.91 451.36h0M674.17 451.36h0M686.44 451.36h0M698.71 451.36h0M710.98 451.36h0M723.24 451.36h0M735.51 451.36h0M747.78 451.36h0M760.04 451.36h0M772.31 451.36h0M784.58 451.36h0M796.85 451.36h0M809.11 451.36h0M821.38 451.36h0M833.65 451.36h0M845.91 451.36h0M858.18 451.36h0M870.45 451.36h0M882.71 451.36h0M894.98 451.36h0M907.25 451.36h0M919.51 451.36h0M931.78 451.36h0M944.05 451.36h0M956.32 451.36h0M968.58 451.36h0M980.85 451.36h0M993.12 451.36h0M1005.38 451.36h0M1017.65 451.36h0M1029.92 451.36h0M1042.18 451.36h0M1054.45 451.36h0M1066.72 451.36h0M1078.99 451.36h0M1091.25 451.36h0M1103.52 451.36h0M367.50 463.63h0M379.77 463.63h0M392.03 463.63h0M404.30 463.63h0M416.57 463.63h0M428.83 463.63h0M441.10 463.63h0M453.37 463.63h0M465.64 463.63h0M477.90 463.63h0M490.17 463.63h0M502.44 463.63h0M514.70 463.63h0M526.97 463.63h0M539.24 463.63h0M551.50 463.63h0M563.77 463.63h0M576.04 463.63h0M588.31 463.63h0M600.57 463.63h0M612.84 463.63h0M625.11 463.63h0M637.37 463.63h0M649.64 463.63h0M661.91 463.63h0M674.17 463.63h0M686.44 463.63h0M698.71 463.63h0M710.98 463.63h0M723.24 463.63h0M735.51 463.63h0M747.78 463.63h0M760.04 463.63h0M772.31 463.63h0M784.58 463.63h0M796.85 463.63h0M809.11 463.63h0M821.38 463.63h0M833.65 463.63h0M845.91 463.63h0M858.18 463.63h0M870.45 463.63h0M882.71 463.63h0M894.98 463.63h0M907.25 463.63h0M919.51 463.63h0M931.78 463.63h0M944.05 463.63h0M956.32 463.63h0M968.58 463.63h0M980.85 463.63h0M993.12 463.63h0M1005.38 463.63h0M1017.65 463.63h0M1029.92 463.63h0M1042.18 463.63h0M1054.45 463.63h0M1066.72 463.63h0M1078.99 463.63h0M1091.25 463.63h0M1103.52 463.63h0M367.50 475.91h0M379.77 475.91h0M392.03 475.91h0M404.30 475.91h0M416.57 475.91h0M428.83 475.91h0M441.10 475.91h0M453.37 475.91h0M465.64 475.91h0M477.90 475.91h0M490.17 475.91h0M502.44 475.91h0M514.70 475.91h0M526.97 475.91h0M539.24 475.91h0M551.50 475.91h0M563.77 475.91h0M576.04 475.91h0M588.31 475.91h0M600.57 475.91h0M612.84 475.91h0M625.11 475.91h0M637.37 475.91h0M649.64 475.91h0M661.91 475.91h0M674.17 475.91h0M686.44 475.91h0M698.71 475.91h0M710.98 475.91h0M723.24 475.91h0M735.51 475.91h0M747.78 475.91h0M760.04 475.91h0M772.31 475.91h0M784.58 475.91h0M796.85 475.91h0M809.11 475.91h0M821.38 475.91h0M833.65 475.91h0M845.91 475.91h0M858.18 475.91h0M870.45 475.91h0M882.71 475.91h0M894.98 475.91h0M907.25 475.91h0M919.51 475.91h0M931.78 475.91h0M944.05 475.91h0M956.32 475.91h0M968.58 475.91h0M980.85 475.91h0M993.12 475.91h0M1005.38 475.91h0M1017.65 475.91h0M1029.92 475.91h0M1042.18 475.91h0M1054.45 475.91h0M1066.72 475.91h0M1078.99 475.91h0M1091.25 475.91h0M1103.52 475.91h0M367.50 488.18h0M379.77 488.18h0M392.03 488.18h0M404.30 488.18h0M416.57 488.18h0M428.83 488.18h0M441.10 488.18h0M453.37 488.18h0M465.64 488.18h0M477.90 488.18h0M490.17 488.18h0M502.44 488.18h0M514.70 488.18h0M526.97 488.18h0M539.24 488.18h0M551.50 488.18h0M563.77 488.18h0M576.04 488.18h0M588.31 488.18h0M600.57 488.18h0M612.84 488.18h0M625.11 488.18h0M637.37 488.18h0M649.64 488.18h0M661.91 488.18h0M674.17 488.18h0M686.44 488.18h0M698.71 488.18h0M710.98 488.18h0M723.24 488.18h0M735.51 488.18h0M747.78 488.18h0M760.04 488.18h0M772.31 488.18h0M784.58 488.18h0M796.85 488.18h0M809.11 488.18h0M821.38 488.18h0M833.65 488.18h0M845.91 488.18h0M858.18 488.18h0M870.45 488.18h0M882.71 488.18h0M894.98 488.18h0M907.25 488.18h0M919.51 488.18h0M931.78 488.18h0M944.05 488.18h0M956.32 488.18h0M968.58 488.18h0M980.85 488.18h0M993.12 488.18h0M1005.38 488.18h0M1017.65 488.18h0M1029.92 488.18h0M1042.18 488.18h0M1054.45 488.18h0M1066.72 488.18h0M1078.99 488.18h0M1091.25 488.18h0M1103.52 488.18h0M367.50 500.46h0M379.77 500.46h0M392.03 500.46h0M404.30 500.46h0M416.57 500.46h0M428.83 500.46h0M441.10 500.46h0M453.37 500.46h0M465.64 500.46h0M477.90 500.46h0M490.17 500.46h0M502.44 500.46h0M514.70 500.46h0M526.97 500.46h0M539.24 500.46h0M551.50 500.46h0M563.77 500.46h0M576.04 500.46h0M588.31 500.46h0M600.57 500.46h0M612.84 500.46h0M625.11 500.46h0M637.37 500.46h0M649.64 500.46h0M661.91 500.46h0M674.17 500.46h0M686.44 500.46h0M698.71 500.46h0M710.98 500.46h0M723.24 500.46h0M735.51 500.46h0M747.78 500.46h0M760.04 500.46h0M772.31 500.46h0M784.58 500.46h0M796.85 500.46h0M809.11 500.46h0M821.38 500.46h0M833.65 500.46h0M845.91 500.46h0M858.18 500.46h0M870.45 500.46h0M882.71 500.46h0M894.98 500.46h0M907.25 500.46h0M919.51 500.46h0M931.78 500.46h0M944.05 500.46h0M956.32 500.46h0M968.58 500.46h0M980.85 500.46h0M993.12 500.46h0M1005.38 500.46h0M1017.65 500.46h0M1029.92 500.46h0M1042.18 500.46h0M1054.45 500.46h0M1066.72 500.46h0M1078.99 500.46h0M1091.25 500.46h0M1103.52 500.46h0M367.50 512.74h0M379.77 512.74h0M392.03 512.74h0M404.30 512.74h0M416.57 512.74h0M428.83 512.74h0M441.10 512.74h0M453.37 512.74h0M465.64 512.74h0M477.90 512.74h0M490.17 512.74h0M502.44 512.74h0M514.70 512.74h0M526.97 512.74h0M539.24 512.74h0M551.50 512.74h0M563.77 512.74h0M576.04 512.74h0M588.31 512.74h0M600.57 512.74h0M612.84 512.74h0M625.11 512.74h0M637.37 512.74h0M649.64 512.74h0M661.91 512.74h0M674.17 512.74h0M686.44 512.74h0M698.71 512.74h0M710.98 512.74h0M723.24 512.74h0M735.51 512.74h0M747.78 512.74h0M760.04 512.74h0M772.31 512.74h0M784.58 512.74h0M796.85 512.74h0M809.11 512.74h0M821.38 512.74h0M833.65 512.74h0M845.91 512.74h0M858.18 512.74h0M870.45 512.74h0M882.71 512.74h0M894.98 512.74h0M907.25 512.74h0M919.51 512.74h0M931.78 512.74h0M944.05 512.74h0M956.32 512.74h0M968.58 512.74h0M980.85 512.74h0M993.12 512.74h0M1005.38 512.74h0M1017.65 512.74h0M1029.92 512.74h0M1042.18 512.74h0M1054.45 512.74h0M1066.72 512.74h0M1078.99 512.74h0M1091.25 512.74h0M1103.52 512.74h0M367.50 525.01h0M379.77 525.01h0M392.03 525.01h0M404.30 525.01h0M416.57 525.01h0M428.83 525.01h0M441.10 525.01h0M453.37 525.01h0M465.64 525.01h0M477.90 525.01h0M490.17 525.01h0M502.44 525.01h0M514.70 525.01h0M526.97 525.01h0M539.24 525.01h0M551.50 525.01h0M563.77 525.01h0M576.04 525.01h0M588.31 525.01h0M600.57 525.01h0M612.84 525.01h0M625.11 525.01h0M637.37 525.01h0M649.64 525.01h0M661.91 525.01h0M674.17 525.01h0M686.44 525.01h0M698.71 525.01h0M710.98 525.01h0M723.24 525.01h0M735.51 525.01h0M747.78 525.01h0M760.04 525.01h0M772.31 525.01h0M784.58 525.01h0M796.85 525.01h0M809.11 525.01h0M821.38 525.01h0M833.65 525.01h0M845.91 525.01h0M858.18 525.01h0M870.45 525.01h0M882.71 525.01h0M894.98 525.01h0M907.25 525.01h0M919.51 525.01h0M931.78 525.01h0M944.05 525.01h0M956.32 525.01h0M968.58 525.01h0M980.85 525.01h0M993.12 525.01h0M1005.38 525.01h0M1017.65 525.01h0M1029.92 525.01h0M1042.18 525.01h0M1054.45 525.01h0M1066.72 525.01h0M1078.99 525.01h0M1091.25 525.01h0M1103.52 525.01h0M367.50 537.29h0M379.77 537.29h0M392.03 537.29h0M404.30 537.29h0M416.57 537.29h0M428.83 537.29h0M441.10 537.29h0M453.37 537.29h0M465.64 537.29h0M477.90 537.29h0M490.17 537.29h0M502.44 537.29h0M514.70 537.29h0M526.97 537.29h0M539.24 537.29h0M551.50 537.29h0M563.77 537.29h0M576.04 537.29h0M588.31 537.29h0M600.57 537.29h0M612.84 537.29h0M625.11 537.29h0M637.37 537.29h0M649.64 537.29h0M661.91 537.29h0M674.17 537.29h0M686.44 537.29h0M698.71 537.29h0M710.98 537.29h0M723.24 537.29h0M735.51 537.29h0M747.78 537.29h0M760.04 537.29h0M772.31 537.29h0M784.58 537.29h0M796.85 537.29h0M809.11 537.29h0M821.38 537.29h0M833.65 537.29h0M845.91 537.29h0M858.18 537.29h0M870.45 537.29h0M882.71 537.29h0M894.98 537.29h0M907.25 537.29h0M919.51 537.29h0M931.78 537.29h0M944.05 537.29h0M956.32 537.29h0M968.58 537.29h0M980.85 537.29h0M993.12 537.29h0M1005.38 537.29h0M1017.65 537.29h0M1029.92 537.29h0M1042.18 537.29h0M1054.45 537.29h0M1066.72 537.29h0M1078.99 537.29h0M1091.25 537.29h0M1103.52 537.29h0M367.50 549.56h0M379.77 549.56h0M392.03 549.56h0M404.30 549.56h0M416.57 549.56h0M428.83 549.56h0M441.10 549.56h0M453.37 549.56h0M465.64 549.56h0M477.90 549.56h0M490.17 549.56h0M502.44 549.56h0M514.70 549.56h0M526.97 549.56h0M539.24 549.56h0M551.50 549.56h0M563.77 549.56h0M576.04 549.56h0M588.31 549.56h0M600.57 549.56h0M612.84 549.56h0M625.11 549.56h0M637.37 549.56h0M649.64 549.56h0M661.91 549.56h0M674.17 549.56h0M686.44 549.56h0M698.71 549.56h0M710.98 549.56h0M723.24 549.56h0M735.51 549.56h0M747.78 549.56h0M760.04 549.56h0M772.31 549.56h0M784.58 549.56h0M796.85 549.56h0M809.11 549.56h0M821.38 549.56h0M833.65 549.56h0M845.91 549.56h0M858.18 549.56h0M870.45 549.56h0M882.71 549.56h0M894.98 549.56h0M907.25 549.56h0M919.51 549.56h0M931.78 549.56h0M944.05 549.56h0M956.32 549.56h0M968.58 549.56h0M980.85 549.56h0M993.12 549.56h0M1005.38 549.56h0M1017.65 549.56h0M1029.92 549.56h0M1042.18 549.56h0M1054.45 549.56h0M1066.72 549.56h0M1078.99 549.56h0M1091.25 549.56h0M1103.52 549.56h0M367.50 561.84h0M379.77 561.84h0M392.03 561.84h0M404.30 561.84h0M416.57 561.84h0M428.83 561.84h0M441.10 561.84h0M453.37 561.84h0M465.64 561.84h0M477.90 561.84h0M490.17 561.84h0M502.44 561.84h0M514.70 561.84h0M526.97 561.84h0M539.24 561.84h0M551.50 561.84h0M563.77 561.84h0M576.04 561.84h0M588.31 561.84h0M600.57 561.84h0M612.84 561.84h0M625.11 561.84h0M637.37 561.84h0M649.64 561.84h0M661.91 561.84h0M674.17 561.84h0M686.44 561.84h0M698.71 561.84h0M710.98 561.84h0M723.24 561.84h0M735.51 561.84h0M747.78 561.84h0M760.04 561.84h0M772.31 561.84h0M784.58 561.84h0M796.85 561.84h0M809.11 561.84h0M821.38 561.84h0M833.65 561.84h0M845.91 561.84h0M858.18 561.84h0M870.45 561.84h0M882.71 561.84h0M894.98 561.84h0M907.25 561.84h0M919.51 561.84h0M931.78 561.84h0M944.05 561.84h0M956.32 561.84h0M968.58 561.84h0M980.85 561.84h0M993.12 561.84h0M1005.38 561.84h0M1017.65 561.84h0M1029.92 561.84h0M1042.18 561.84h0M1054.45 561.84h0M1066.72 561.84h0M1078.99 561.84h0M1091.25 561.84h0M1103.52 561.84h0M367.50 574.12h0M379.77 574.12h0M392.03 574.12h0M404.30 574.12h0M416.57 574.12h0M428.83 574.12h0M441.10 574.12h0M453.37 574.12h0M465.64 574.12h0M477.90 574.12h0M490.17 574.12h0M502.44 574.12h0M514.70 574.12h0M526.97 574.12h0M539.24 574.12h0M551.50 574.12h0M563.77 574.12h0M576.04 574.12h0M588.31 574.12h0M600.57 574.12h0M612.84 574.12h0M625.11 574.12h0M637.37 574.12h0M649.64 574.12h0M661.91 574.12h0M674.17 574.12h0M686.44 574.12h0M698.71 574.12h0M710.98 574.12h0M723.24 574.12h0M735.51 574.12h0M747.78 574.12h0M760.04 574.12h0M772.31 574.12h0M784.58 574.12h0M796.85 574.12h0M809.11 574.12h0M821.38 574.12h0M833.65 574.12h0M845.91 574.12h0M858.18 574.12h0M870.45 574.12h0M882.71 574.12h0M894.98 574.12h0M907.25 574.12h0M919.51 574.12h0M931.78 574.12h0M944.05 574.12h0M956.32 574.12h0M968.58 574.12h0M980.85 574.12h0M993.12 574.12h0M1005.38 574.12h0M1017.65 574.12h0M1029.92 574.12h0M1042.18 574.12h0M1054.45 574.12h0M1066.72 574.12h0M1078.99 574.12h0M1091.25 574.12h0M1103.52 574.12h0M367.50 586.39h0M379.77 586.39h0M392.03 586.39h0M404.30 586.39h0M416.57 586.39h0M428.83 586.39h0M441.10 586.39h0M453.37 586.39h0M465.64 586.39h0M477.90 586.39h0M490.17 586.39h0M502.44 586.39h0M514.70 586.39h0M526.97 586.39h0M539.24 586.39h0M551.50 586.39h0M563.77 586.39h0M576.04 586.39h0M588.31 586.39h0M600.57 586.39h0M612.84 586.39h0M625.11 586.39h0M637.37 586.39h0M649.64 586.39h0M661.91 586.39h0M674.17 586.39h0M686.44 586.39h0M698.71 586.39h0M710.98 586.39h0M723.24 586.39h0M735.51 586.39h0M747.78 586.39h0M760.04 586.39h0M772.31 586.39h0M784.58 586.39h0M796.85 586.39h0M809.11 586.39h0M821.38 586.39h0M833.65 586.39h0M845.91 586.39h0M858.18 586.39h0M870.45 586.39h0M882.71 586.39h0M894.98 586.39h0M907.25 586.39h0M919.51 586.39h0M931.78 586.39h0M944.05 586.39h0M956.32 586.39h0M968.58 586.39h0M980.85 586.39h0M993.12 586.39h0M1005.38 586.39h0M1017.65 586.39h0M1029.92 586.39h0M1042.18 586.39h0M1054.45 586.39h0M1066.72 586.39h0M1078.99 586.39h0M1091.25 586.39h0M1103.52 586.39h0M367.50 598.67h0M379.77 598.67h0M392.03 598.67h0M404.30 598.67h0M416.57 598.67h0M428.83 598.67h0M441.10 598.67h0M453.37 598.67h0M465.64 598.67h0M477.90 598.67h0M490.17 598.67h0M502.44 598.67h0M514.70 598.67h0M526.97 598.67h0M539.24 598.67h0M551.50 598.67h0M563.77 598.67h0M576.04 598.67h0M588.31 598.67h0M600.57 598.67h0M612.84 598.67h0M625.11 598.67h0M637.37 598.67h0M649.64 598.67h0M661.91 598.67h0M674.17 598.67h0M686.44 598.67h0M698.71 598.67h0M710.98 598.67h0M723.24 598.67h0M735.51 598.67h0M747.78 598.67h0M760.04 598.67h0M772.31 598.67h0M784.58 598.67h0M796.85 598.67h0M809.11 598.67h0M821.38 598.67h0M833.65 598.67h0M845.91 598.67h0M858.18 598.67h0M870.45 598.67h0M882.71 598.67h0M894.98 598.67h0M907.25 598.67h0M919.51 598.67h0M931.78 598.67h0M944.05 598.67h0M956.32 598.67h0M968.58 598.67h0M980.85 598.67h0M993.12 598.67h0M1005.38 598.67h0M1017.65 598.67h0M1029.92 598.67h0M1042.18 598.67h0M1054.45 598.67h0M1066.72 598.67h0M1078.99 598.67h0M1091.25 598.67h0M1103.52 598.67h0M367.50 610.94h0M379.77 610.94h0M392.03 610.94h0M404.30 610.94h0M416.57 610.94h0M428.83 610.94h0M441.10 610.94h0M453.37 610.94h0M465.64 610.94h0M477.90 610.94h0M490.17 610.94h0M502.44 610.94h0M514.70 610.94h0M526.97 610.94h0M539.24 610.94h0M551.50 610.94h0M563.77 610.94h0M576.04 610.94h0M588.31 610.94h0M600.57 610.94h0M612.84 610.94h0M625.11 610.94h0M637.37 610.94h0M649.64 610.94h0M661.91 610.94h0M674.17 610.94h0M686.44 610.94h0M698.71 610.94h0M710.98 610.94h0M723.24 610.94h0M735.51 610.94h0M747.78 610.94h0M760.04 610.94h0M772.31 610.94h0M784.58 610.94h0M796.85 610.94h0M809.11 610.94h0M821.38 610.94h0M833.65 610.94h0M845.91 610.94h0M858.18 610.94h0M870.45 610.94h0M882.71 610.94h0M894.98 610.94h0M907.25 610.94h0M919.51 610.94h0M931.78 610.94h0M944.05 610.94h0M956.32 610.94h0M968.58 610.94h0M980.85 610.94h0M993.12 610.94h0M1005.38 610.94h0M1017.65 610.94h0M1029.92 610.94h0M1042.18 610.94h0M1054.45 610.94h0M1066.72 610.94h0M1078.99 610.94h0M1091.25 610.94h0M1103.52 610.94h0M367.50 623.22h0M379.77 623.22h0M392.03 623.22h0M404.30 623.22h0M416.57 623.22h0M428.83 623.22h0M441.10 623.22h0M453.37 623.22h0M465.64 623.22h0M477.90 623.22h0M490.17 623.22h0M502.44 623.22h0M514.70 623.22h0M526.97 623.22h0M539.24 623.22h0M551.50 623.22h0M563.77 623.22h0M576.04 623.22h0M588.31 623.22h0M600.57 623.22h0M612.84 623.22h0M625.11 623.22h0M637.37 623.22h0M649.64 623.22h0M661.91 623.22h0M674.17 623.22h0M686.44 623.22h0M698.71 623.22h0M710.98 623.22h0M723.24 623.22h0M735.51 623.22h0M747.78 623.22h0M760.04 623.22h0M772.31 623.22h0M784.58 623.22h0M796.85 623.22h0M809.11 623.22h0M821.38 623.22h0M833.65 623.22h0M845.91 623.22h0M858.18 623.22h0M870.45 623.22h0M882.71 623.22h0M894.98 623.22h0M907.25 623.22h0M919.51 623.22h0M931.78 623.22h0M944.05 623.22h0M956.32 623.22h0M968.58 623.22h0M980.85 623.22h0M993.12 623.22h0M1005.38 623.22h0M1017.65 623.22h0M1029.92 623.22h0M1042.18 623.22h0M1054.45 623.22h0M1066.72 623.22h0M1078.99 623.22h0M1091.25 623.22h0M1103.52 623.22h0M367.50 635.50h0M379.77 635.50h0M392.03 635.50h0M404.30 635.50h0M416.57 635.50h0M428.83 635.50h0M441.10 635.50h0M453.37 635.50h0M465.64 635.50h0M477.90 635.50h0M490.17 635.50h0M502.44 635.50h0M514.70 635.50h0M526.97 635.50h0M539.24 635.50h0M551.50 635.50h0M563.77 635.50h0M576.04 635.50h0M588.31 635.50h0M600.57 635.50h0M612.84 635.50h0M625.11 635.50h0M637.37 635.50h0M649.64 635.50h0M661.91 635.50h0M674.17 635.50h0M686.44 635.50h0M698.71 635.50h0M710.98 635.50h0M723.24 635.50h0M735.51 635.50h0M747.78 635.50h0M760.04 635.50h0M772.31 635.50h0M784.58 635.50h0M796.85 635.50h0M809.11 635.50h0M821.38 635.50h0M833.65 635.50h0M845.91 635.50h0M858.18 635.50h0M870.45 635.50h0M882.71 635.50h0M894.98 635.50h0M907.25 635.50h0M919.51 635.50h0M931.78 635.50h0M944.05 635.50h0M956.32 635.50h0M968.58 635.50h0M980.85 635.50h0M993.12 635.50h0M1005.38 635.50h0M1017.65 635.50h0M1029.92 635.50h0M1042.18 635.50h0M1054.45 635.50h0M1066.72 635.50h0M1078.99 635.50h0M1091.25 635.50h0M1103.52 635.50h0M367.50 647.77h0M379.77 647.77h0M392.03 647.77h0M404.30 647.77h0M416.57 647.77h0M428.83 647.77h0M441.10 647.77h0M453.37 647.77h0M465.64 647.77h0M477.90 647.77h0M490.17 647.77h0M502.44 647.77h0M514.70 647.77h0M526.97 647.77h0M539.24 647.77h0M551.50 647.77h0M563.77 647.77h0M576.04 647.77h0M588.31 647.77h0M600.57 647.77h0M612.84 647.77h0M625.11 647.77h0M637.37 647.77h0M649.64 647.77h0M661.91 647.77h0M674.17 647.77h0M686.44 647.77h0M698.71 647.77h0M710.98 647.77h0M723.24 647.77h0M735.51 647.77h0M747.78 647.77h0M760.04 647.77h0M772.31 647.77h0M784.58 647.77h0M796.85 647.77h0M809.11 647.77h0M821.38 647.77h0M833.65 647.77h0M845.91 647.77h0M858.18 647.77h0M870.45 647.77h0M882.71 647.77h0M894.98 647.77h0M907.25 647.77h0M919.51 647.77h0M931.78 647.77h0M944.05 647.77h0M956.32 647.77h0M968.58 647.77h0M980.85 647.77h0M993.12 647.77h0M1005.38 647.77h0M1017.65 647.77h0M1029.92 647.77h0M1042.18 647.77h0M1054.45 647.77h0M1066.72 647.77h0M1078.99 647.77h0M1091.25 647.77h0M1103.52 647.77h0M367.50 660.05h0M379.77 660.05h0M392.03 660.05h0M404.30 660.05h0M416.57 660.05h0M428.83 660.05h0M441.10 660.05h0M453.37 660.05h0M465.64 660.05h0M477.90 660.05h0M490.17 660.05h0M502.44 660.05h0M514.70 660.05h0M526.97 660.05h0M539.24 660.05h0M551.50 660.05h0M563.77 660.05h0M576.04 660.05h0M588.31 660.05h0M600.57 660.05h0M612.84 660.05h0M625.11 660.05h0M637.37 660.05h0M649.64 660.05h0M661.91 660.05h0M674.17 660.05h0M686.44 660.05h0M698.71 660.05h0M710.98 660.05h0M723.24 660.05h0M735.51 660.05h0M747.78 660.05h0M760.04 660.05h0M772.31 660.05h0M784.58 660.05h0M796.85 660.05h0M809.11 660.05h0M821.38 660.05h0M833.65 660.05h0M845.91 660.05h0M858.18 660.05h0M870.45 660.05h0M882.71 660.05h0M894.98 660.05h0M907.25 660.05h0M919.51 660.05h0M931.78 660.05h0M944.05 660.05h0M956.32 660.05h0M968.58 660.05h0M980.85 660.05h0M993.12 660.05h0M1005.38 660.05h0M1017.65 660.05h0M1029.92 660.05h0M1042.18 660.05h0M1054.45 660.05h0M1066.72 660.05h0M1078.99 660.05h0M1091.25 660.05h0M1103.52 660.05h0" stroke="#3a3a3d" stroke-width="1.3" stroke-linecap="round" fill="none"/>
<g fill="none" stroke="#6c6c70" stroke-width="1.4"><path d="M623.2 289.0 L917.6 289.0"/><path d="M623.2 306.5 L654.5 306.5 Q657.5 306.5 657.5 309.5 L657.5 356.3 Q657.5 359.3 660.5 359.3 L691.4 359.3"/><path d="M623.2 324.2 L635.4 324.2 Q638.4 324.2 638.4 327.2 L638.4 535.3 Q638.4 538.3 641.4 538.3 L653.6 538.3"/><path d="M746.3 538.3 L829.0 538.3 Q832.0 538.3 832.0 535.3 L832.0 292.0 Q832.0 289.0 835.0 289.0 L917.6 289.0"/></g>
</svg>
<div class="tb" style="left:703.0px;top:144.0px;width:80.0px;height:74.0px"><div class="th" style="background:#ca8a03">User</div><div class="tr" style="top:18.20px;height:18.27px"><span class="fn" style="line-height:18.27px">id</span><span class="ft" style="left:36.5px;line-height:18.27px">string</span></div><div class="tr" style="top:36.47px;height:18.27px"><span class="fn" style="line-height:18.27px">name</span><span class="ft" style="left:36.5px;line-height:18.27px">string</span></div><div class="tr" style="top:54.73px;height:18.27px"><span class="fn" style="line-height:18.27px">email</span><span class="ft" style="left:36.5px;line-height:18.27px">string</span></div></div><div class="tb" style="left:504.0px;top:225.0px;width:119.0px;height:109.0px"><div class="th" style="background:#0d9388">Dashboard</div><div class="tr" style="top:18.20px;height:17.96px"><span class="fn" style="line-height:17.96px">id</span><span class="ft" style="left:59.0px;line-height:17.96px">string</span></div><div class="tr" style="top:36.16px;height:17.96px"><span class="fn" style="line-height:17.96px">userId</span><span class="ft" style="left:59.0px;line-height:17.96px">string</span></div><div class="tr" style="top:54.12px;height:17.96px"><span class="fn" style="line-height:17.96px">accounts</span><span class="ft" style="left:59.0px;line-height:17.96px">Account</span></div><div class="tr" style="top:72.08px;height:17.96px"><span class="fn" style="line-height:17.96px">transactions</span><span class="ft" style="left:59.0px;line-height:17.96px">Transaction</span></div><div class="tr" style="top:90.04px;height:17.96px"><span class="fn" style="line-height:17.96px">portfolios</span><span class="ft" style="left:59.0px;line-height:17.96px">Portfolio</span></div></div><div class="tb" style="left:917.0px;top:261.0px;width:87.0px;height:91.0px"><div class="th" style="background:#0d9388">Account</div><div class="tr" style="top:18.20px;height:17.95px"><span class="fn" style="line-height:17.95px">id</span><span class="ft" style="left:42.7px;line-height:17.95px">string</span></div><div class="tr" style="top:36.15px;height:17.95px"><span class="fn" style="line-height:17.95px">name</span><span class="ft" style="left:42.7px;line-height:17.95px">string</span></div><div class="tr" style="top:54.10px;height:17.95px"><span class="fn" style="line-height:17.95px">type</span><span class="ft" style="left:42.7px;line-height:17.95px">string</span></div><div class="tr" style="top:72.05px;height:17.95px"><span class="fn" style="line-height:17.95px">balance</span><span class="ft" style="left:42.7px;line-height:17.95px">double</span></div></div><div class="tb" style="left:691.0px;top:332.0px;width:100.0px;height:126.0px"><div class="th" style="background:#0d9388">Transaction</div><div class="tr" style="top:18.20px;height:17.80px"><span class="fn" style="line-height:17.80px">id</span><span class="ft" style="left:56.3px;line-height:17.80px">string</span></div><div class="tr" style="top:36.00px;height:17.80px"><span class="fn" style="line-height:17.80px">accountId</span><span class="ft" style="left:56.3px;line-height:17.80px">string</span></div><div class="tr" style="top:53.80px;height:17.80px"><span class="fn" style="line-height:17.80px">description</span><span class="ft" style="left:56.3px;line-height:17.80px">string</span></div><div class="tr" style="top:71.60px;height:17.80px"><span class="fn" style="line-height:17.80px">amount</span><span class="ft" style="left:56.3px;line-height:17.80px">double</span></div><div class="tr" style="top:89.40px;height:17.80px"><span class="fn" style="line-height:17.80px">category</span><span class="ft" style="left:56.3px;line-height:17.80px">string</span></div><div class="tr" style="top:107.20px;height:17.80px"><span class="fn" style="line-height:17.80px">date</span><span class="ft" style="left:56.3px;line-height:17.80px">string</span></div></div><div class="tb" style="left:653.0px;top:510.5px;width:94.0px;height:73.0px"><div class="th" style="background:#0d9388">Portfolio</div><div class="tr" style="top:18.20px;height:17.93px"><span class="fn" style="line-height:17.93px">id</span><span class="ft" style="left:46.3px;line-height:17.93px">string</span></div><div class="tr" style="top:36.13px;height:17.93px"><span class="fn" style="line-height:17.93px">userId</span><span class="ft" style="left:46.3px;line-height:17.93px">string</span></div><div class="tr" style="top:54.07px;height:17.93px"><span class="fn" style="line-height:17.93px">accounts</span><span class="ft" style="left:46.3px;line-height:17.93px">Account</span></div></div>
<div class="hl" style="left:504.2px;top:297.3px;width:119px;height:18.5px;border-color:#0a30fc"></div>
<div class="hl" style="left:653.6px;top:547.4px;width:92.7px;height:18.3px;border-color:#ff5f00"></div>
<div class="badge" style="left:443.3px;top:286.5px;width:37px;height:29.2px;border-radius:10px;background:#0038fe;font-size:16.8px;letter-spacing:-0.5px;text-indent:-1.3px;line-height:29.8px">PM</div>
<div class="badge" style="left:759.3px;top:555.4px;width:110.5px;height:28.2px;border-radius:10px;background:#ff5c00;font-size:16.8px;letter-spacing:-0.29px;text-indent:-1.3px;line-height:31.6px">Developer</div>
</div></body></html>
